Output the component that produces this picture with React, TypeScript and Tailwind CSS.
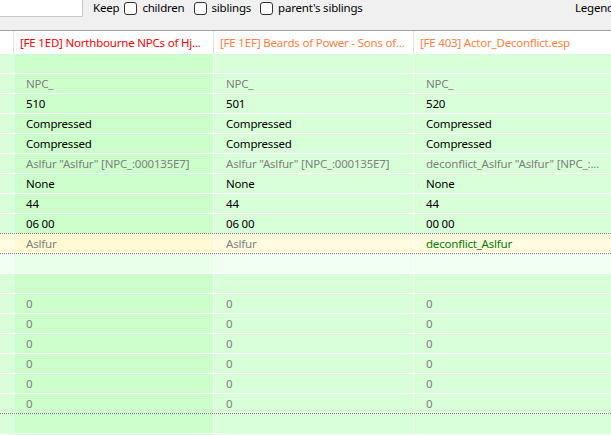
import React from "react";

type Row = {
  vals: [string, string, string];
  kind?: "normal" | "yellow" | "light";
  bottom?: "white" | "gray";
  colors?: [string, string, string];
};

const Check = ({ label }: { label: string }) => (
  <div className="flex items-center gap-[5px]">
    <div className="w-[13px] h-[13px] rounded-[3px] border border-[#333333] bg-white" />
    <span>{label}</span>
  </div>
);

export default function App() {
  const G = "text-[#808080]";
  const B = "text-[#000000]";
  const rows: Row[] = [
    { vals: ["", "", ""] },
    { vals: ["NPC_", "NPC_", "NPC_"], colors: [G, G, G] },
    { vals: ["510", "501", "520"], colors: [B, B, B] },
    { vals: ["Compressed", "Compressed", "Compressed"], colors: [B, B, B] },
    { vals: ["Compressed", "Compressed", "Compressed"], colors: [B, B, B] },
    {
      vals: [
        'Aslfur "Aslfur" [NPC_:000135E7]',
        'Aslfur "Aslfur" [NPC_:000135E7]',
        'deconflict_Aslfur "Aslfur" [NPC_:...',
      ],
      colors: [G, G, G],
    },
    { vals: ["None", "None", "None"], colors: [B, B, B] },
    { vals: ["44", "44", "44"], colors: [B, B, B] },
    { vals: ["06 00", "06 00", "00 00"], colors: [B, B, B], bottom: "gray" },
    {
      vals: ["Aslfur", "Aslfur", "deconflict_Aslfur"],
      colors: [G, G, "text-[#008000]"],
      kind: "yellow",
      bottom: "gray",
    },
    { vals: ["", "", ""], kind: "light" },
    { vals: ["", "", ""] },
    { vals: ["0", "0", "0"], colors: [G, G, G] },
    { vals: ["0", "0", "0"], colors: [G, G, G] },
    { vals: ["0", "0", "0"], colors: [G, G, G] },
    { vals: ["0", "0", "0"], colors: [G, G, G] },
    { vals: ["0", "0", "0"], colors: [G, G, G] },
    { vals: ["0", "0", "0"], colors: [G, G, G], bottom: "gray" },
    { vals: ["", "", ""] },
    { vals: ["", "", ""] },
  ];

  const bgFor = (kind: Row["kind"], col: number) => {
    if (kind === "yellow") return col === 1 ? "bg-[#fff9d4]" : "bg-[#fffce0]";
    if (kind === "light") return col === 1 ? "bg-[#eaffea]" : "bg-[#f0fff0]";
    return col === 1 ? "bg-[#ccffcc]" : "bg-[#d8ffd8]";
  };

  return (
    <div
      className="w-[611px] h-[435px] overflow-hidden bg-white text-[11.5px] tracking-[-0.2px] leading-none text-black"
      style={{ fontFamily: '"Noto Sans", "Open Sans", sans-serif' }}
    >
      {/* toolbar */}
      <div className="h-[31px] bg-[#f0f0f0] border-b border-[#a0a0a0] flex items-start">
        <div className="w-[83px] h-[17px] bg-white border-r border-b border-[#c8c8c8]" />
        <div className="flex items-center gap-[9px] ml-[10px] h-[16px] text-[#000]">
          <div className="flex items-center gap-[5px]">
            <span>Keep</span>
            <Check label="children" />
          </div>
          <Check label="siblings" />
          <Check label="parent's siblings" />
        </div>
        <div className="ml-auto h-[16px] flex items-center pl-[8px] -mr-[3px] whitespace-nowrap">
          Legend
        </div>
      </div>

      {/* header */}
      <div className="h-[23px] bg-white flex">
        <div className="w-[13px] shrink-0" />
        <div className="w-[200px] shrink-0 border-l border-[#e0e0e0] pl-[6px] flex items-center whitespace-nowrap overflow-hidden text-[#ff0000]">
          [FE 1ED] Northbourne NPCs of Hj...
        </div>
        <div className="w-[200px] shrink-0 border-l border-[#e0e0e0] pl-[6px] flex items-center whitespace-nowrap overflow-hidden text-[#ff8040]">
          [FE 1EF] Beards of Power - Sons of...
        </div>
        <div className="flex-1 border-l border-[#e0e0e0] pl-[6px] flex items-center whitespace-nowrap overflow-hidden text-[#ff8040]">
          [FE 403] Actor_Deconflict.esp
        </div>
      </div>

      {/* rows */}
      <div className="flex flex-col">
        {rows.map((r, i) => {
          const bottom =
            r.bottom === "gray"
              ? "border-b border-dotted border-[#808080]"
              : "border-b border-dotted border-white";
          return (
            <div key={i} className={`h-[20px] flex ${bottom}`}>
              <div className={`w-[13px] shrink-0 ${bgFor(r.kind, 0)}`} />
              {[0, 1, 2].map((c) => (
                <div
                  key={c}
                  className={`${c === 2 ? "flex-1" : "w-[200px] shrink-0"} border-l border-dotted border-white ${bgFor(
                    r.kind,
                    c + 1
                  )} pl-[12px] pr-[2px] flex items-center whitespace-nowrap overflow-hidden ${
                    r.colors ? r.colors[c] : ""
                  }`}
                >
                  {r.vals[c]}
                </div>
              ))}
            </div>
          );
        })}
      </div>
    </div>
  );
}
